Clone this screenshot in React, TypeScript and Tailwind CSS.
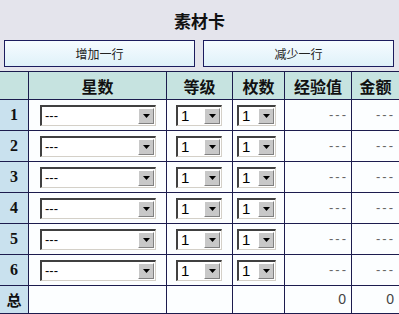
import React from 'react';

const rows = [1, 2, 3, 4, 5, 6];

function Select({ width, label, size }: { width: string; label: string; size: string }) {
  return (
    <div className={`${width} h-[21px] flex items-stretch bg-white border-t-2 border-l-2 border-t-[#404040] border-l-[#404040] border-r border-b border-r-[#d4d0c8] border-b-[#d4d0c8]`}>
      <div className={`flex-1 flex items-center pl-[3px] ${size} text-black leading-none font-['Liberation_Sans',sans-serif]`}>{label}</div>
      <div className="w-[16px] m-[1px] flex items-center justify-center bg-[#c8c8c8] border-t border-l border-t-white border-l-white border-r border-b border-r-[#808080] border-b-[#808080]">
        <svg width="7" height="4" viewBox="0 0 7 4">
          <polygon points="0,0 7,0 3.5,4" fill="#000" />
        </svg>
      </div>
    </div>
  );
}

export default function App() {
  const cjk = "font-['Noto_Sans_CJK_SC',sans-serif]";
  const dash = "bg-[#fcfeff] flex items-center justify-end text-[13px] tracking-[2px] text-[#666] font-['Liberation_Sans',sans-serif]";
  return (
    <div className={`w-[399px] h-[314px] bg-white overflow-hidden ${cjk}`}>
      <div className="h-[71px] bg-[#e4e4ec] flex flex-col">
        <div className="h-[40px] flex items-center justify-center text-[17px] font-bold text-[#111] leading-none">素材卡</div>
        <div className="flex pl-[4px] gap-[8px]">
          <button className="w-[191px] h-[27px] border border-[#1c1c5e] bg-gradient-to-b from-[#f6fcff] to-[#dff1f9] text-[12px] text-[#222] leading-none">增加一行</button>
          <button className="w-[191px] h-[27px] border border-[#1c1c5e] bg-gradient-to-b from-[#f6fcff] to-[#dff1f9] text-[12px] text-[#222] leading-none">减少一行</button>
        </div>
      </div>
      <div className="grid grid-cols-[28px_137px_65px_51px_66px_47px] grid-rows-[27px_repeat(6,30px)_27px] gap-px bg-[#1c1c4e] border-y border-[#1c1c4e]">
        <div className="bg-[#c6e3e0]" />
        {['星数', '等级', '枚数', '经验值', '金额'].map((h) => (
          <div key={h} className="bg-[#c6e3e0] flex items-center justify-center text-[16px] font-bold text-[#111] leading-none">{h}</div>
        ))}
        {rows.map((r) => (
          <React.Fragment key={r}>
            <div className="bg-[#c9e1ee] flex items-center justify-center text-[16px] font-bold text-[#111] font-['Liberation_Serif',serif]">{r}</div>
            <div className="bg-[#fcfeff] flex items-center pl-[11px]">
              <Select width="w-[116px]" label="---" size="text-[13px]" />
            </div>
            <div className="bg-[#fcfeff] flex items-center pl-[9px]">
              <Select width="w-[46px]" label="1" size="text-[15px]" />
            </div>
            <div className="bg-[#fcfeff] flex items-center pl-[4px]">
              <Select width="w-[39px]" label="1" size="text-[15px]" />
            </div>
            <div className={`${dash} pr-[3px]`}>---</div>
            <div className={`${dash} pr-[4px]`}>---</div>
          </React.Fragment>
        ))}
        <div className="bg-[#c9e1ee] flex items-center justify-center text-[15px] font-bold text-[#111] leading-none">总</div>
        <div className="bg-[#fcfeff]" />
        <div className="bg-[#fcfeff]" />
        <div className="bg-[#fcfeff]" />
        <div className="bg-[#fcfeff] flex items-center justify-end pr-[5px] text-[14px] text-[#444] font-['Liberation_Sans',sans-serif]">0</div>
        <div className="bg-[#fcfeff] flex items-center justify-end pr-[5px] text-[14px] text-[#444] font-['Liberation_Sans',sans-serif]">0</div>
      </div>
    </div>
  );
}
